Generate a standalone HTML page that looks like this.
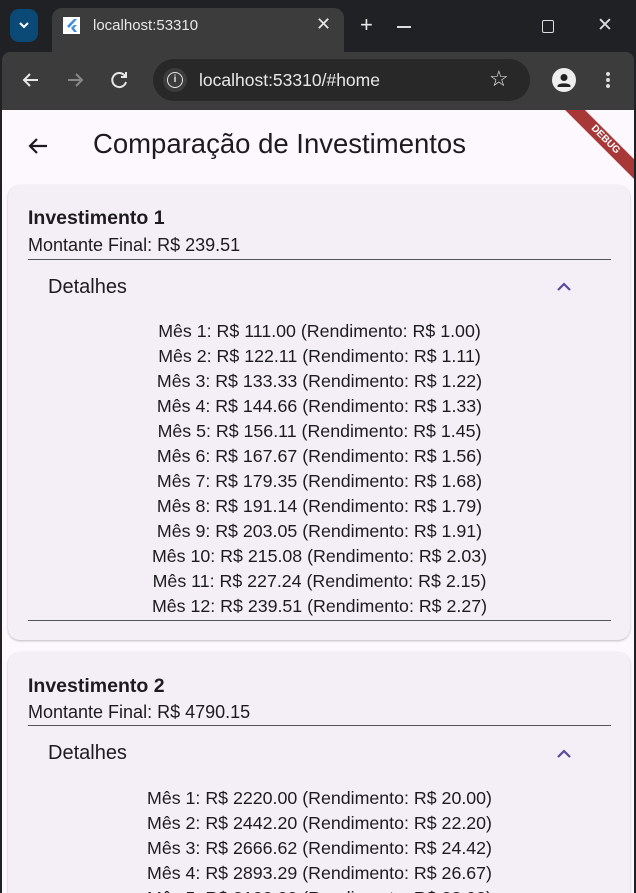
<!DOCTYPE html>
<html><head><meta charset="utf-8"><style>
*{box-sizing:border-box;margin:0;padding:0}
html,body{width:636px;height:893px;overflow:hidden}
body{background:#202124;font-family:"Liberation Sans",sans-serif;position:relative}
.tabbar{position:absolute;left:0;top:0;width:636px;height:52px;background:#202124}
.tab{position:absolute;left:52px;top:8px;width:292px;height:44px;background:#3c3c3c;border-radius:10px 10px 0 0}
.toolbar{position:absolute;left:2px;top:52px;width:632px;height:58px;background:#3c3c3c;border-radius:8px 8px 0 0}
.omni{position:absolute;left:153px;top:59px;width:377px;height:42px;background:#282828;border-radius:21px}
.page{position:absolute;left:2px;top:110px;width:632px;height:783px;background:#fdf7fe;overflow:hidden}
.card{position:absolute;left:6px;width:622px;background:#f4eff6;border-radius:12px;box-shadow:0 1px 2px rgba(0,0,0,.25)}
.t{position:absolute;color:#1d1b20;white-space:nowrap}
.rows div{height:25px;line-height:25px;text-align:center;font-size:17.8px;color:#1d1b20}
</style></head><body>
<div class="tabbar"></div>
<div style="position:absolute;left:10px;top:9px;width:28px;height:33px;background:#0b4a76;border-radius:9px"></div>
<svg style="position:absolute;left:17px;top:20px" width="14" height="10"><path d="M3 3l4 4 4-4" stroke="#fff" stroke-width="2" fill="none"/></svg>
<div class="tab"></div>
<div style="position:absolute;left:63px;top:17px;width:17px;height:17px;background:#fff"></div>
<svg style="position:absolute;left:65px;top:18px" width="14" height="15"><path d="M9 1L2 8l2 2 8-9zM9 7l-3 3 3 4h3l-3-4 3-3z" fill="#3b8fdc"/></svg>
<div class="t" style="left:93px;top:17px;font-size:15px;color:#e8e8e8">localhost:53310</div>
<div class="t" style="left:316px;top:14px;font-size:18px;color:#e8e8e8">✕</div>
<div class="t" style="left:360px;top:12px;font-size:22px;color:#e8e8e8">+</div>
<div style="position:absolute;left:397px;top:26px;width:14px;height:1.5px;background:#ddd"></div>
<div style="position:absolute;left:542px;top:20px;width:12px;height:13px;border:1.5px solid #ddd;border-radius:2px"></div>
<div class="t" style="left:597px;top:14px;font-size:19px;color:#ddd">✕</div>
<div class="toolbar"></div>
<svg style="position:absolute;left:20px;top:70px" width="22" height="20"><path d="M18 10H4M10 4l-6 6 6 6" stroke="#e8e8e8" stroke-width="2" fill="none"/></svg>
<svg style="position:absolute;left:64px;top:70px" width="22" height="20"><path d="M4 10h14M12 4l6 6-6 6" stroke="#888" stroke-width="2" fill="none"/></svg>
<svg style="position:absolute;left:110px;top:70px" width="20" height="20"><path d="M15 6a7 7 0 1 0 1 6M16 2v5h-5" stroke="#e8e8e8" stroke-width="2" fill="none"/></svg>
<div class="omni"></div>
<div style="position:absolute;left:163px;top:68px;width:24px;height:24px;border-radius:12px;background:#3c3c3c"></div>
<div style="position:absolute;left:167px;top:72px;width:16px;height:16px;border:1.8px solid #e8e8e8;border-radius:8px;color:#e8e8e8;font-size:10px;font-weight:bold;text-align:center;line-height:13px">i</div>
<div class="t" style="left:199px;top:70px;font-size:17.5px;color:#e8e8e8">localhost:53310/#home</div>
<div class="t" style="left:489px;top:66px;font-size:22px;color:#e8e8e8">☆</div>
<div style="position:absolute;left:552px;top:68px;width:24px;height:24px;border-radius:12px;background:#eee"></div>
<svg style="position:absolute;left:552px;top:68px" width="24" height="24"><circle cx="12" cy="9.5" r="3.5" fill="#222"/><path d="M5.5 18c0-3.5 13-3.5 13 0v1h-13z" fill="#222"/></svg>
<div style="position:absolute;left:606px;top:72px;width:4px;height:4px;border-radius:2px;background:#ddd;box-shadow:0 6px 0 #ddd,0 12px 0 #ddd"></div>
<div class="page">
<svg style="position:absolute;left:24px;top:24px" width="24" height="24"><path d="M21 12H4M11 5l-7 7 7 7" stroke="#1d1b20" stroke-width="2.2" fill="none"/></svg>
<div class="t" style="left:91px;top:18px;font-size:27.5px">Comparação de Investimentos</div>
<div style="position:absolute;left:543px;top:23px;width:120px;height:14px;background:#a83838;transform:rotate(45deg);color:#fff;font-size:10px;font-weight:bold;text-align:center;line-height:14px">DEBUG</div>
<div class="card" style="top:75px;height:455px">
<div class="t" style="left:20px;top:22px;font-size:19.5px;font-weight:bold">Investimento 1</div>
<div class="t" style="left:20px;top:50px;font-size:18px">Montante Final: R$ 239.51</div>
<div style="position:absolute;left:20px;top:74px;width:583px;height:1px;background:#555"></div>
<div class="t" style="left:40px;top:91px;font-size:20px">Detalhes</div>
<svg style="position:absolute;left:548px;top:96px" width="16" height="12"><path d="M2 9l6-6 6 6" stroke="#5b4a9a" stroke-width="2.2" fill="none"/></svg>
<div class="rows" style="position:absolute;left:20px;top:134px;width:583px">
<div>Mês 1: R$ 111.00 (Rendimento: R$ 1.00)</div><div>Mês 2: R$ 122.11 (Rendimento: R$ 1.11)</div><div>Mês 3: R$ 133.33 (Rendimento: R$ 1.22)</div><div>Mês 4: R$ 144.66 (Rendimento: R$ 1.33)</div><div>Mês 5: R$ 156.11 (Rendimento: R$ 1.45)</div><div>Mês 6: R$ 167.67 (Rendimento: R$ 1.56)</div><div>Mês 7: R$ 179.35 (Rendimento: R$ 1.68)</div><div>Mês 8: R$ 191.14 (Rendimento: R$ 1.79)</div><div>Mês 9: R$ 203.05 (Rendimento: R$ 1.91)</div><div>Mês 10: R$ 215.08 (Rendimento: R$ 2.03)</div><div>Mês 11: R$ 227.24 (Rendimento: R$ 2.15)</div><div>Mês 12: R$ 239.51 (Rendimento: R$ 2.27)</div>
</div>
<div style="position:absolute;left:20px;top:435px;width:583px;height:1px;background:#555"></div>
</div>
<div class="card" style="top:542px;height:300px">
<div class="t" style="left:20px;top:23px;font-size:19.5px;font-weight:bold">Investimento 2</div>
<div class="t" style="left:20px;top:50px;font-size:18px">Montante Final: R$ 4790.15</div>
<div style="position:absolute;left:20px;top:73px;width:583px;height:1px;background:#555"></div>
<div class="t" style="left:40px;top:90px;font-size:20px">Detalhes</div>
<svg style="position:absolute;left:548px;top:96px" width="16" height="12"><path d="M2 9l6-6 6 6" stroke="#5b4a9a" stroke-width="2.2" fill="none"/></svg>
<div class="rows" style="position:absolute;left:20px;top:134px;width:583px">
<div>Mês 1: R$ 2220.00 (Rendimento: R$ 20.00)</div><div>Mês 2: R$ 2442.20 (Rendimento: R$ 22.20)</div><div>Mês 3: R$ 2666.62 (Rendimento: R$ 24.42)</div><div>Mês 4: R$ 2893.29 (Rendimento: R$ 26.67)</div><div>Mês 5: R$ 3122.22 (Rendimento: R$ 28.93)</div>
</div>
</div>
</div>
</body></html>
